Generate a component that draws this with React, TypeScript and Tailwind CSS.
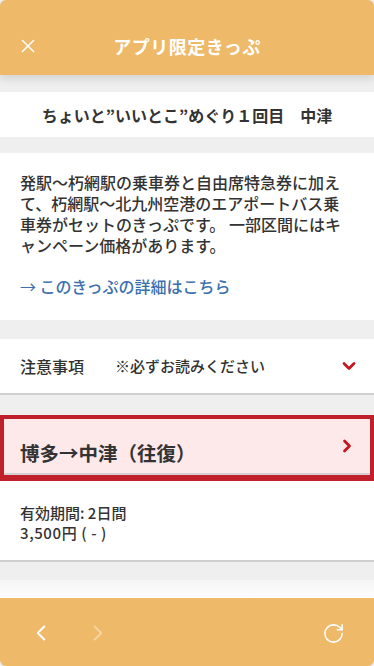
import { ChevronDown, ChevronRight, ChevronLeft, RotateCw, X } from 'lucide-react';

const font = { fontFamily: '"Noto Sans CJK JP", "Noto Sans", sans-serif' };

export default function App() {
  return (
    <div className="w-[374px] h-[666px] flex flex-col bg-[#efefef] overflow-hidden" style={font}>
      {/* header */}
      <header className="h-[75px] shrink-0 bg-[#eeb968] rounded-t-[6px] relative z-10 flex items-end pb-[9px] shadow-[0_4px_8px_rgba(0,0,0,0.12)]">
        <div className="relative w-full h-10 flex items-center justify-center">
          <button className="absolute left-[17px] top-[9px] text-white">
            <X className="w-[22px] h-[22px]" strokeWidth={1.6} />
          </button>
          <h1 className="text-white text-[18px] font-bold tracking-[0.5px]">アプリ限定きっぷ</h1>
        </div>
      </header>

      <div className="flex-1 flex flex-col">
        <div className="h-[17px]" />
        <div className="h-[45px] bg-white flex items-center justify-center">
          <p className="text-[16px] font-bold text-[#333]">ちょいと”いいとこ”めぐり１回目　中津</p>
        </div>

        <div className="h-[16px]" />
        <section className="h-[167px] bg-white px-5 pt-[19px]">
          <p className="text-[16px] leading-[21px] font-medium text-[#333]">
            発駅〜朽網駅の乗車券と自由席特急券に加えて、朽網駅〜北九州空港のエアポートバス乗車券がセットのきっぷです。 一部区間にはキャンペーン価格があります。
          </p>
          <a className="block mt-[17px] text-[16px] leading-[27px] font-medium text-[#3b6fae]">
            <span className="font-normal">→</span> このきっぷの詳細はこちら
          </a>
        </section>

        <div className="h-[19px]" />
        <div className="h-[56px] bg-white border-b-[2px] border-[#cfcfcf] flex items-center pl-5 pr-[15px] text-[#333]">
          <span className="text-[16px] font-medium w-[95px]">注意事項</span>
          <span className="text-[15px] font-medium flex-1">※必ずお読みください</span>
          <ChevronDown className="w-[20px] h-[20px] text-[#c8141e]" strokeWidth={3.3} />
        </div>

        <div className="h-[20px]" />
        <div className="h-[66px] border-[4px] border-b-[6px] border-[#c0202a] bg-[#fde8ea] flex flex-col">
          <div className="flex-1 flex items-center pl-4 pr-[13px] border-b-[2px] border-[#d6d0d0]">
            <span className="flex-1 text-[19.5px] font-bold text-[#333] pt-[13px]">博多→中津（往復）</span>
            <ChevronRight className="w-[20px] h-[20px] text-[#c8141e]" strokeWidth={3.3} />
          </div>
        </div>

        <div className="h-[81px] bg-white border-b-[2px] border-[#cfcfcf] px-5 pt-[22px] text-[#333]">
          <p className="text-[15px] leading-[20px] font-medium">有効期間: 2日間</p>
          <p className="text-[15px] leading-[20px] font-medium tracking-[0.6px]">3,500円 ( - )</p>
        </div>

        <div className="h-[18px]" />
        <div className="flex-1 bg-gradient-to-b from-[#f4f4f4] to-white" />
      </div>

      {/* footer */}
      <footer className="h-[68px] shrink-0 bg-[#eeb968] rounded-b-[6px] flex items-center px-[28px] pt-[2px]">
        <ChevronLeft className="w-[26px] h-[26px] text-white" strokeWidth={1.8} />
        <ChevronRight className="w-[26px] h-[26px] text-white/40 ml-[31px]" strokeWidth={1.8} />
        <div className="flex-1" />
        <RotateCw className="w-[23px] h-[23px] text-white mr-[1px]" strokeWidth={1.6} />
      </footer>
    </div>
  );
}
